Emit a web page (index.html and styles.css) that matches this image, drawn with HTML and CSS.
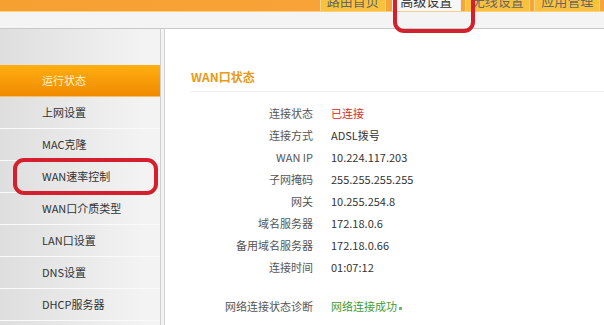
FILE: index.html
```html
<!DOCTYPE html>
<html lang="zh-CN">
<head>
    <meta charset="UTF-8">
    <title>WAN口状态</title>
    <link rel="stylesheet" href="styles.css">
</head>
<body>

<!-- 顶部导航 -->
<div class="topbar">
    <div class="tab">路由首页</div>
    <div class="tab active">高级设置</div>
    <div class="tab">无线设置</div>
    <div class="tab">应用管理</div>
</div>
<div class="subbar"></div>

<div class="main">
    <!-- 左侧菜单 -->
    <div class="sidebar">
        <div class="menu-item active">运行状态</div>
        <div class="menu-item">上网设置</div>
        <div class="menu-item">MAC克隆</div>
        <div class="menu-item">WAN速率控制</div>
        <div class="menu-item">WAN口介质类型</div>
        <div class="menu-item">LAN口设置</div>
        <div class="menu-item">DNS设置</div>
        <div class="menu-item">DHCP服务器</div>
    </div>

    <!-- 内容 -->
    <div class="content">
        <div class="section-title">WAN口状态</div>
        <div class="info">
            <div class="label">连接状态</div><div class="value red">已连接</div>
            <div class="label">连接方式</div><div class="value">ADSL拨号</div>
            <div class="label">WAN IP</div><div class="value">10.224.117.203</div>
            <div class="label">子网掩码</div><div class="value">255.255.255.255</div>
            <div class="label">网关</div><div class="value">10.255.254.8</div>
            <div class="label">域名服务器</div><div class="value">172.18.0.6</div>
            <div class="label">备用域名服务器</div><div class="value">172.18.0.66</div>
            <div class="label">连接时间</div><div class="value">01:07:12</div>
            <div class="label diag">网络连接状态诊断</div><div class="value diag green">网络连接成功<span class="dot"></span></div>
        </div>
    </div>
</div>

<!-- 红色标注 -->
<div class="mark mark-tab"></div>
<div class="mark mark-menu"></div>

</body>
</html>
```

FILE: styles.css
```css
body {
    margin: 0;
    width: 604px;
    height: 325px;
    overflow: hidden;
    position: relative;
    font-family: "Noto Sans CJK SC", sans-serif;
    font-size: 11px;
    color: #444;
    background-color: #f3f3f3;
}

.topbar {
    height: 11px;
    display: flex;
    padding-left: 320px;
    background: linear-gradient(to right, #f6a032, #f8a53a);
    border-bottom: 1px solid #fbcf86;
    overflow: hidden;
}

.tab {
    width: 68px;
    height: 11px;
    margin-right: 4px;
    background-color: #fac23c;
    border-left: 1px solid #f5d98a;
    border-right: 1px solid #f5d98a;
    color: #666;
    font-size: 13px;
    line-height: 2px;
    text-align: center;
    overflow: hidden;
}

.tab.active {
    width: 72px;
    margin-left: 2px;
    background-color: #f7f7f7;
    color: #333;
    border-color: #eee;
}

.subbar {
    height: 16px;
    background-color: #f4f4f4;
    border-bottom: 1px solid #c9c9c9;
}

.main {
    display: flex;
    height: 296px;
}

.sidebar {
    width: 160px;
    padding-top: 36px;
    background: linear-gradient(to right, #dedede, #f3f3f3 90%);
    border-right: 1px solid #cfcfcf;
}

.menu-item {
    height: 31px;
    line-height: 31px;
    padding-left: 42px;
    border-bottom: 1px solid #fafafa;
    color: #333;
}

.menu-item.active {
    background: linear-gradient(to bottom, #ffae10, #f08a00);
    color: #fff3d0;
    border-bottom-color: #f7c060;
}

.content {
    flex-grow: 1;
    margin-left: 3px;
    padding-top: 40px;
    padding-left: 26px;
    background-color: #fff;
    border-left: 1px solid #d4d4d4;
}

.section-title {
    height: 16px;
    line-height: 16px;
    padding-bottom: 6px;
    border-bottom: 1px solid #ececec;
    color: #e89a1c;
    font-size: 12px;
    font-weight: bold;
}

.info {
    display: grid;
    grid-template-columns: 122px auto;
    grid-auto-rows: 22px;
    column-gap: 18px;
    margin-top: 10px;
    line-height: 22px;
}

.label {
    text-align: right;
    color: #555;
}

.value {
    color: #333;
}

.diag {
    margin-top: 17px;
}

.red {
    color: #d42a2a;
}

.green {
    color: #3f9a35;
}

.dot {
    display: inline-block;
    width: 3px;
    height: 3px;
    margin-left: 2px;
    vertical-align: middle;
    background-color: #6cbf60;
}

.mark {
    position: absolute;
    border: 4px solid #d3202c;
    border-radius: 11px;
}

.mark-tab {
    left: 393px;
    top: -20px;
    width: 74px;
    height: 45px;
}

.mark-menu {
    left: 13px;
    top: 158px;
    width: 137px;
    height: 29px;
}
```
